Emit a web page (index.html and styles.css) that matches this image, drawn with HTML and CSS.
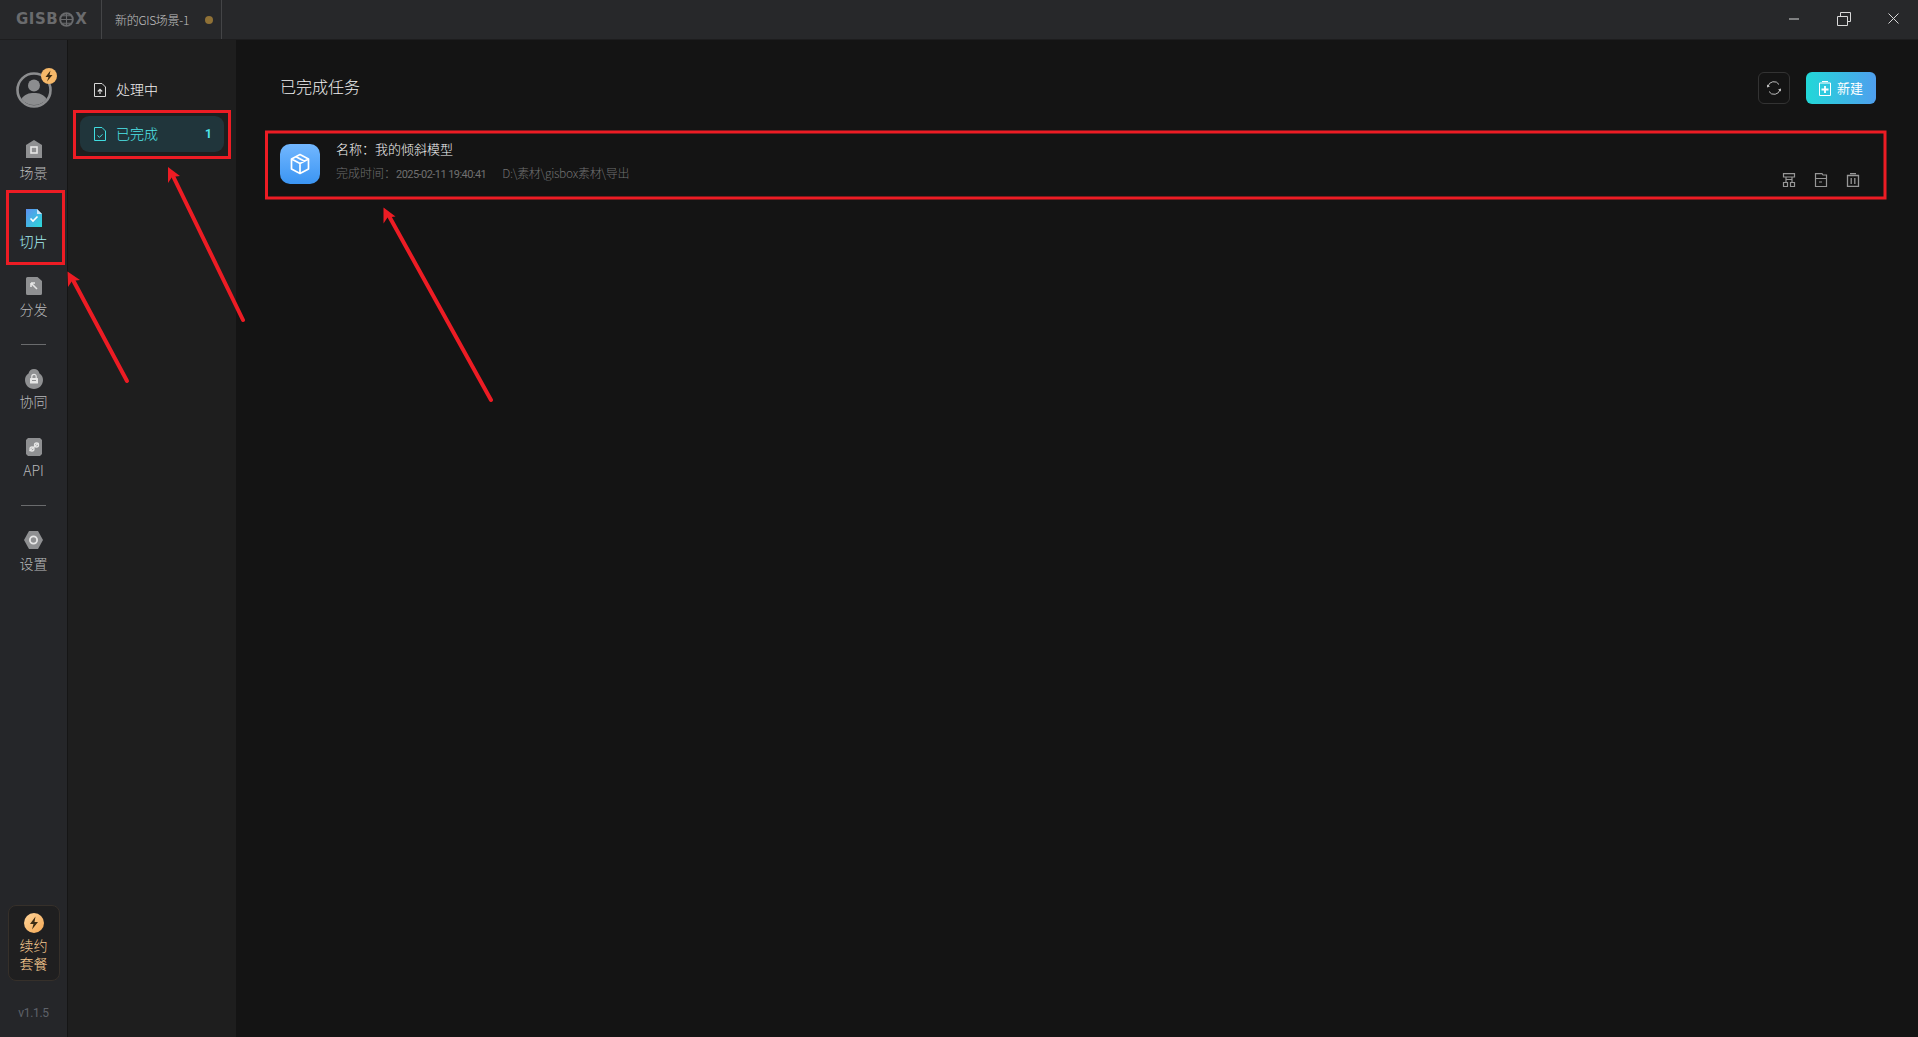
FILE: index.html
```html
<!DOCTYPE html>
<html lang="zh">
<head>
<meta charset="utf-8">
<title>GISBox</title>
<link rel="stylesheet" href="styles.css">
</head>
<body>
<div class="app">
  <header class="titlebar">
    <div class="brand">GISB<svg class="brand-globe" viewBox="0 0 14 14"><circle cx="7" cy="7" r="5.900" fill="none" stroke="#6a6b6d" stroke-width="1.800"/><path d="M1 7h12M7 1v12M3 3.500h8M3 10.500h8" stroke="#6a6b6d" stroke-width="1"/></svg>X</div>
    <div class="tab"><span>新的GIS场景-1</span><i class="tab-dot"></i></div>
    <div class="winctl">
      <svg class="win-ico" viewBox="0 0 16 16"><path d="M3 8h10" stroke="#d8d8d8" stroke-width="1"/></svg>
      <svg class="win-ico" viewBox="0 0 16 16"><path d="M1.500 5.500h10v9h-10zM4.500 5V1.500h10v9H12" fill="none" stroke="#d8d8d8" stroke-width="1"/></svg>
      <svg class="win-ico" viewBox="0 0 16 16"><path d="M2.500 2.500l10 10M12.500 2.500l-10 10" stroke="#d8d8d8" stroke-width="1"/></svg>
    </div>
  </header>
  <div class="body">
    <nav class="rail">
      <div class="avatar">
        <svg viewBox="0 0 36 36" class="avatar-svg"><circle cx="18" cy="18" r="16.500" fill="#26272a" stroke="#8c8d8f" stroke-width="2.600"/><circle cx="18" cy="13.500" r="6" fill="#8c8d8f"/><path d="M5.500 27c3-5 7.500-6 12.500-6s9.500 1 12.500 6c-3 4-7.500 6-12.500 6s-9.500-2-12.500-6z" fill="#8c8d8f"/></svg>
        <svg viewBox="0 0 16 16" class="avatar-badge"><circle cx="8" cy="8" r="8" fill="#f6b869"/><path d="M9.500 2.500L4.500 9h3l-1.500 4.500L11.500 7H8.500z" fill="#3d2c14"/></svg>
      </div>
      <a class="rail-item rail-first">
        <svg class="rail-ico" viewBox="0 0 16 18"><path d="M8 0l8 5v13H0V5z" fill="#8f9092"/><rect x="5" y="7" width="6" height="6" fill="none" stroke="#e6e6e6" stroke-width="1.600"/></svg>
        <span>场景</span>
      </a>
      <a class="rail-item active">
        <svg class="rail-ico" viewBox="0 0 16 18"><defs><linearGradient id="g1" x1="0" y1="0" x2="1" y2="1"><stop offset="0" stop-color="#5d8ff0"/><stop offset="1" stop-color="#2bdad8"/></linearGradient></defs><path d="M0 0h11l5 5v13H0z" fill="url(#g1)"/><path d="M11 0l5 5h-5z" fill="#cfe7fa"/><path d="M4.500 9.500l2.500 2.500 4.500-4.500" fill="none" stroke="#fff" stroke-width="1.600"/></svg>
        <span>切片</span>
      </a>
      <a class="rail-item">
        <svg class="rail-ico" viewBox="0 0 16 18"><path d="M1.500 0h10l4.500 4v12.500a1.500 1.500 0 0 1-1.500 1.500h-13A1.500 1.500 0 0 1 0 16.500v-15A1.500 1.500 0 0 1 1.500 0z" fill="#8f9092"/><path d="M5 6v4M5 6h4M5 6l6 6" fill="none" stroke="#e6e6e6" stroke-width="1.600"/></svg>
        <span>分发</span>
      </a>
      <div class="rail-sep"></div>
      <a class="rail-item rail-tall">
        <svg class="rail-ico rail-ico-wide" viewBox="0 0 18 20"><path d="M9 0c3 0 5 2 5.500 4.500C16.800 6 18 8 18 11c0 5-4 9-9 9s-9-4-9-9c0-3 1.200-5 3.500-6.500C4 2 6 0 9 0z" fill="#8f9092"/><rect x="5" y="9" width="8" height="5.500" rx="0.500" fill="#e6e6e6"/><path d="M6.800 9V7.500a2.200 2.200 0 0 1 4.400 0V9" fill="none" stroke="#e6e6e6" stroke-width="1.200"/><path d="M7 11.500h4" stroke="#8f9092" stroke-width="1"/></svg>
        <span>协同</span>
      </a>
      <a class="rail-item">
        <svg class="rail-ico" viewBox="0 0 16 18"><path d="M2 0h12l2 2v14l-2 2H2l-2-2V2z" fill="#8f9092"/><path d="M3.500 13L12.500 5" stroke="#e6e6e6" stroke-width="1.400"/><circle cx="6" cy="11" r="2" fill="none" stroke="#e6e6e6" stroke-width="1.300"/><circle cx="10.500" cy="7" r="2" fill="none" stroke="#e6e6e6" stroke-width="1.300"/></svg>
        <span>API</span>
      </a>
      <div class="rail-sep rail-sep-last"></div>
      <a class="rail-item">
        <svg class="rail-ico rail-ico-hex" viewBox="0 0 19 18"><path d="M5 0h9l5 9-5 9H5L0 9z" fill="#8f9092"/><circle cx="9.500" cy="9" r="3.600" fill="none" stroke="#e6e6e6" stroke-width="1.800"/></svg>
        <span>设置</span>
      </a>
      <div class="rail-spacer"></div>
      <a class="renew">
        <svg class="renew-ico" viewBox="0 0 20 20"><defs><linearGradient id="g2" x1="0" y1="0" x2="1" y2="1"><stop offset="0" stop-color="#ffd49a"/><stop offset="1" stop-color="#f5a955"/></linearGradient></defs><circle cx="10" cy="10" r="10" fill="url(#g2)"/><path d="M11.500 3.500L6 11h3.500l-1.500 5.500L14 9h-3.500z" fill="#3d2c14"/></svg>
        <span>续约<br>套餐</span>
      </a>
      <div class="version">v1.1.5</div>
    </nav>
    <aside class="subnav">
      <a class="sub-item">
        <svg class="sub-ico" viewBox="0 0 12 14"><path d="M.5.500h7.500l3.500 3.500v9.500H.5z" fill="none" stroke="#d8d8d8"/><path d="M6 11V7M3.800 8.500L6 6.300l2.200 2.200" fill="none" stroke="#d8d8d8" stroke-width="1.200"/></svg>
        <span class="sub-label">处理中</span>
      </a>
      <a class="sub-item current">
        <svg class="sub-ico" viewBox="0 0 12 14"><path d="M.5.500h7.500l3.500 3.500v9.500H.5z" fill="none" stroke="#3fdde0"/><path d="M3.500 8.500l2 1.800 3-3" fill="none" stroke="#3fdde0"/></svg>
        <span class="sub-label">已完成</span>
        <b class="sub-count">1</b>
      </a>
    </aside>
    <main class="main">
      <div class="main-head">
        <h1 class="main-title">已完成任务</h1>
        <button class="btn-refresh">
          <svg viewBox="0 0 16 16" class="refresh-ico"><path d="M2 6.500A6 6 0 0 1 13 4.500M14 9.500A6 6 0 0 1 3 11.500" fill="none" stroke="#bdbdbd" stroke-width="1"/><path d="M1 4.500l3 2-3 1zM15 11.500l-3-2 3-1z" fill="#bdbdbd"/></svg>
        </button>
        <button class="btn-new">
          <svg viewBox="0 0 12 15" class="new-ico"><path d="M.5 2h11v12.500H.5z" fill="none" stroke="#fff"/><path d="M3 .5h6" stroke="#fff"/><path d="M6 5v7M2.500 8.500h7" stroke="#fff" stroke-width="1.800"/></svg>
          <span class="new-label">新建</span>
        </button>
      </div>
      <section class="task">
        <div class="task-ico">
          <svg viewBox="0 0 24 24"><path d="M12 2.500l8.500 4.500v10L12 21.500 3.500 17V7z M3.500 7L12 11.500 20.500 7M12 11.500v10M8 4.800l8.500 4.500" fill="none" stroke="#fff" stroke-width="1.700" stroke-linejoin="round"/></svg>
        </div>
        <div class="task-info">
          <div class="task-name">名称：我的倾斜模型</div>
          <div class="task-meta"><span class="task-time">完成时间：<em>2025-02-11 19:40:41</em></span><span class="task-path">D:\素材\gisbox素材\导出</span></div>
        </div>
        <div class="task-actions">
          <svg viewBox="0 0 14 14"><path d="M1.500.6h11v3.400h-11zM4 4v5M10 4v5M1.500 9.500h4v4h-4zM8.500 9.500h4v4h-4zM4 6.500h6" fill="none" stroke="#979797" stroke-width="1.200"/></svg>
          <svg viewBox="0 0 14 14"><path d="M1.500.6h6.500l1 1.400h3.500v11.500h-11zM1.500 5.500h11M5 9h3" fill="none" stroke="#979797" stroke-width="1.200"/></svg>
          <svg viewBox="0 0 14 14"><path d="M1.500 2.500h11v11h-11zM4 .7h6M5.200 5v6M8.800 5v6" fill="none" stroke="#979797" stroke-width="1.300"/></svg>
        </div>
      </section>
    </main>
  </div>
  <svg class="marks" viewBox="0 0 1918 1037">
    <g fill="none" stroke="#ed1c24" stroke-width="3">
      <rect x="7.500" y="191.500" width="56" height="72"/>
      <rect x="74.500" y="111.500" width="155" height="46"/>
      <rect x="266.500" y="132" width="1618.500" height="66"/>
    </g>
    <g stroke="#ed1c24" stroke-width="4" stroke-linecap="round">
      <path d="M127 381L73 280"/>
      <path d="M243 320L173 176"/>
      <path d="M491 400L389 216"/>
    </g>
    <g fill="#ed1c24">
      <path d="M67.500 271.500L80 280l-8 1-4 6z"/>
      <path d="M168 167l12 9-8 1-4 6z"/>
      <path d="M383.500 207.500l12 9-8 1-4 6z"/>
    </g>
  </svg>
</div>
</body>
</html>
```

FILE: styles.css
```css
* { box-sizing: border-box; }
html, body { margin: 0; height: 100%; overflow: hidden; }
body { font-family: "Noto Sans CJK SC", "Liberation Sans", sans-serif; font-weight: 300; background: #141414; color: #d8d8d8; }
.app { position: relative; height: 1037px; display: flex; flex-direction: column; }
.titlebar { height: 40px; flex: none; display: flex; align-items: center; background: #27282a; border-bottom: 1px solid #1d1d1e; }
.brand { width: 101px; height: 100%; padding-left: 16px; display: flex; align-items: center; font: 700 15px/1 "DejaVu Sans", sans-serif; letter-spacing: .5px; color: #6a6b6d; }
.brand-globe { width: 15px; height: 15px; margin: 0 1px; }
.tab { width: 121px; height: 100%; padding-left: 13px; display: flex; align-items: center; border-left: 1px solid #444547; border-right: 1px solid #444547; font-size: 12px; letter-spacing: -.3px; color: #c0c0c0; }
.tab span { flex: 1; }
.tab-dot { width: 8px; height: 8px; border-radius: 50%; background: #8f7136; margin-right: 8px; }
.winctl { margin-left: auto; display: flex; align-items: center; gap: 34px; padding: 0 16px 1px 0; }
.win-ico { width: 16px; height: 16px; display: block; }
.body { flex: 1; display: flex; min-height: 0; }
.rail { width: 68px; flex: none; display: flex; flex-direction: column; align-items: center; background: #252629; border-right: 1px solid #151515; padding-top: 32px; }
.avatar { position: relative; width: 36px; height: 36px; flex: none; }
.avatar-svg { width: 36px; height: 36px; display: block; }
.avatar-badge { position: absolute; right: -5px; top: -4px; width: 16px; height: 16px; }
.rail-item { width: 100%; flex: none; display: flex; flex-direction: column; align-items: center; color: #b8b9bb; font-size: 14px; line-height: 20px; height: 68px; }
.rail-first { margin-top: 32px; height: 69px; }
.rail-tall { height: 69px; }
.rail-item.active { color: #a4f0f4; }
.rail-ico { width: 16px; height: 18px; display: block; margin-bottom: 4px; }
.rail-ico-wide { width: 18px; height: 20px; margin-bottom: 2px; }
.rail-ico-hex { width: 19px; height: 18px; }
.rail-sep { width: 25px; height: 1px; background: #6a6b6d; flex: none; margin: -1px 0 24px; }
.rail-sep-last { margin-bottom: 25px; }
.rail-spacer { flex: 1; }
.renew { width: 52px; height: 76px; flex: none; display: flex; flex-direction: column; align-items: center; padding-top: 7px; border: 1px solid #36302a; border-radius: 8px; background: #1f1f20; color: #f5c88f; font-size: 14px; line-height: 18px; text-align: center; }
.renew-ico { width: 20px; height: 20px; margin-bottom: 3px; flex: none; }
.version { height: 56px; flex: none; padding-top: 24px; font: 12px/16px "Roboto", sans-serif; letter-spacing: -.3px; color: #5e6269; }
.subnav { width: 168px; flex: none; background: #1e1e1e; padding: 32px 12px 0; }
.sub-item { height: 36px; padding: 0 12px 0 14px; display: flex; align-items: center; gap: 10px; font-size: 14px; color: #f0f0f0; }
.sub-ico { width: 12px; height: 14px; flex: none; }
.sub-item.current { margin-top: 8px; border-radius: 9px; background: #20353b; color: #4fe6ea; }
.sub-label { flex: 1; padding-bottom: 2px; }
.sub-count { font: 700 12px "Roboto", sans-serif; }
.main { flex: 1; min-width: 0; background: #141414; padding: 32px 42px 0 44px; }
.main-head { height: 32px; display: flex; align-items: center; gap: 16px; }
.main-title { flex: 1; margin: 0; padding-bottom: 5px; font-size: 16px; font-weight: 300; color: #f0f0f0; }
.btn-refresh { width: 32px; height: 32px; padding: 0; display: flex; align-items: center; justify-content: center; background: transparent; border: 1px solid #333; border-radius: 6px; }
.refresh-ico { width: 16px; height: 16px; }
.btn-new { width: 70px; height: 32px; padding: 0; display: flex; align-items: center; justify-content: center; gap: 6px; border: 0; border-radius: 6px; background: linear-gradient(90deg, #22d8d8, #4f9fee); color: #fff; font: 400 13px "Noto Sans CJK SC", sans-serif; }
.new-ico { width: 12px; height: 15px; }
.new-label { padding-bottom: 2px; }
.task { height: 66px; margin-top: 27px; display: flex; align-items: center; }
.task-ico { width: 40px; height: 40px; flex: none; display: flex; align-items: center; justify-content: center; border-radius: 10px; background: linear-gradient(180deg, #72b7ff, #3b95f3); }
.task-ico svg { width: 24px; height: 24px; }
.task-info { flex: 1; margin-left: 16px; padding-bottom: 4px; }
.task-name { font-size: 13px; line-height: 18px; color: #f4f4f4; }
.task-meta { margin-top: 6px; font-size: 12px; line-height: 18px; color: #707070; display: flex; gap: 16px; }
.task-time em { font-style: normal; font-size: 11px; font-family: "Roboto", sans-serif; font-weight: 400; letter-spacing: -.55px; }
.task-path { letter-spacing: -.3px; }
.task-actions { align-self: flex-end; display: flex; gap: 18px; padding: 0 16px 10px 0; }
.task-actions svg { width: 14px; height: 14px; display: block; }
.marks { position: absolute; left: 0; top: 0; width: 1918px; height: 1037px; pointer-events: none; }
```
